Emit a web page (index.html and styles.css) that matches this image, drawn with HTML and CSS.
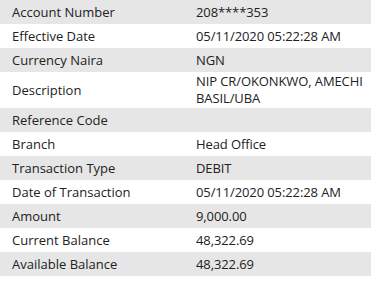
FILE: index.html
```html
<!DOCTYPE html>
<html>
<head>
<meta charset="utf-8">
<link rel="stylesheet" href="styles.css">
</head>
<body>
<table class="details">
  <tr class="row alt"><td class="label">Account Number</td><td class="value">208****353</td></tr>
  <tr class="row"><td class="label">Effective Date</td><td class="value">05/11/2020 05:22:28 AM</td></tr>
  <tr class="row alt"><td class="label">Currency Naira</td><td class="value">NGN</td></tr>
  <tr class="row"><td class="label">Description</td><td class="value">NIP CR/OKONKWO, AMECHI BASIL/UBA</td></tr>
  <tr class="row alt"><td class="label">Reference Code</td><td class="value"></td></tr>
  <tr class="row"><td class="label">Branch</td><td class="value">Head Office</td></tr>
  <tr class="row alt"><td class="label">Transaction Type</td><td class="value">DEBIT</td></tr>
  <tr class="row"><td class="label">Date of Transaction</td><td class="value">05/11/2020 05:22:28 AM</td></tr>
  <tr class="row alt"><td class="label">Amount</td><td class="value">9,000.00</td></tr>
  <tr class="row"><td class="label">Current Balance</td><td class="value">48,322.69</td></tr>
  <tr class="row alt"><td class="label">Available Balance</td><td class="value">48,322.69</td></tr>
</table>
</body>
</html>
```

FILE: styles.css
```css
html, body {
  margin: 0;
  padding: 0;
  background: #ffffff;
}
body {
  font-family: "Open Sans", "Noto Sans", "DejaVu Sans", sans-serif;
  font-size: 13px;
  color: #222222;
}
.details {
  width: 371px;
  border-collapse: collapse;
  table-layout: fixed;
}
.row td {
  height: 24px;
  padding: 1px 12px;
  line-height: 17px;
  vertical-align: middle;
  box-sizing: border-box;
}
.row.alt td {
  background: #e6e6e6;
}
.label {
  width: 184px;
}
.row .value {
  padding-right: 0;
  letter-spacing: -0.1px;
}
```
